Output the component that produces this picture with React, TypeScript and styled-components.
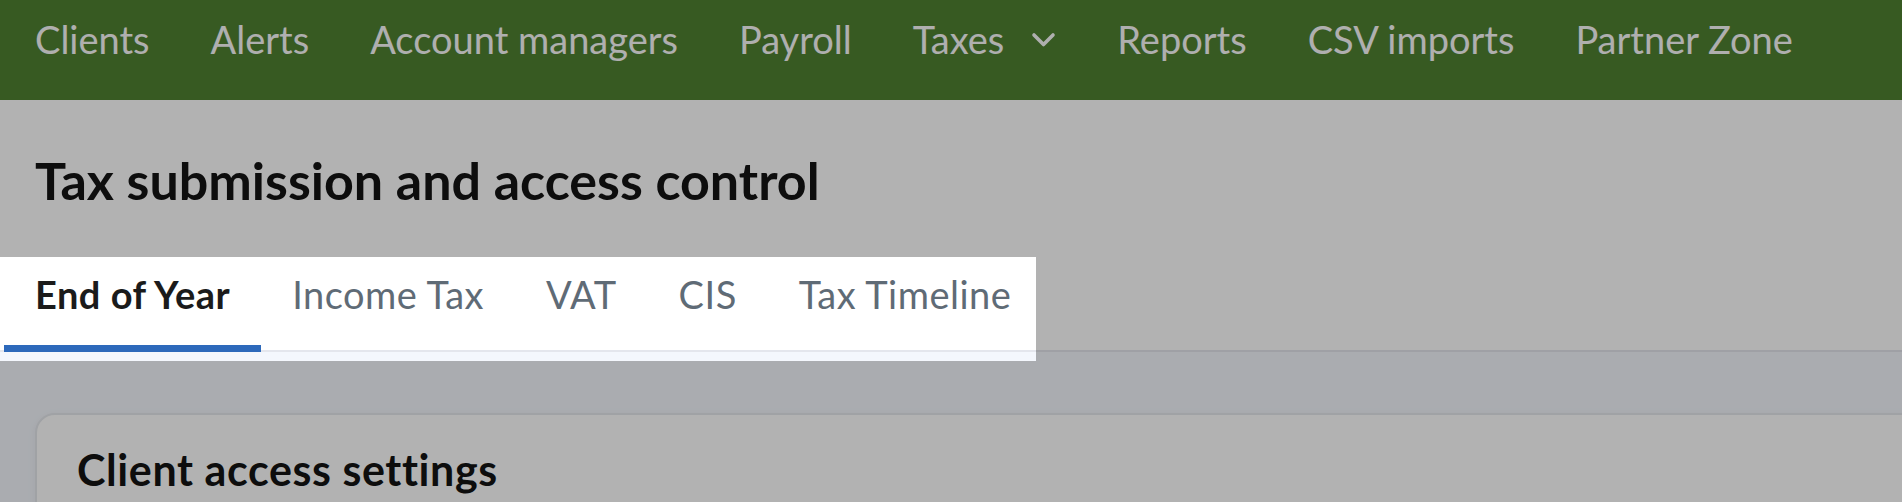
import { createGlobalStyle } from 'styled-components'
import styled from 'styled-components'

const GlobalStyle = createGlobalStyle`
  html, body {
    margin: 0;
    padding: 0;
    overflow: hidden;
    background: #f4f7fd;
    font-family: Lato, "Liberation Sans", sans-serif;
  }
`

const colors = {
  green: '#4f8132',
  white: '#ffffff',
  ink: '#131313',
  slate: '#5f6b76',
  blue: '#2d69bb',
  line: '#e4e6ed',
  page: '#f4f7fd',
}

const Page = styled.div`
  width: 100%;
  min-height: 502px;
  overflow: hidden;
`

const NavBar = styled.nav`
  height: 100px;
  box-sizing: border-box;
  background: ${colors.green};
  display: flex;
  align-items: flex-start;
  gap: 61px;
  padding: 17px 0 0 35px;
`

const NavItem = styled.a`
  display: flex;
  align-items: center;
  gap: 27px;
  color: #fbfbfb;
  font-size: 38px;
  line-height: 1.2;
  text-decoration: none;
  white-space: nowrap;
`

const Header = styled.header`
  background: ${colors.white};
  padding-top: 49px;
`

const Title = styled.h1`
  margin: 0 0 50px 35px;
  font-size: 52px;
  font-weight: 700;
  line-height: 1.2;
  color: ${colors.ink};
`

const TabBar = styled.div`
  border-bottom: 2px solid ${colors.line};
  padding-left: 4px;
`

const TabList = styled.div`
  position: relative;
  display: inline-flex;
  margin-bottom: -2px;
`

/* tutorial highlight: dims everything except the tab list */
const Spotlight = styled.div`
  position: absolute;
  top: -4px;
  bottom: -9px;
  left: -4px;
  right: 6px;
  pointer-events: none;
  z-index: 10;
  box-shadow: 0 0 0 4000px rgba(0, 0, 0, 0.3);
`

const Tab = styled.button<{ $active: boolean }>`
  border: none;
  background: none;
  font-family: inherit;
  padding: 11px 31px 27px;
  font-size: 38px;
  line-height: 1.2;
  letter-spacing: 0.5px;
  font-weight: ${({ $active }) => ($active ? 700 : 400)};
  color: ${({ $active }) => ($active ? '#1b1b1b' : colors.slate)};
  border-bottom: 7px solid ${({ $active }) => ($active ? colors.blue : 'transparent')};
  cursor: pointer;
`

const Main = styled.main`
  background: ${colors.page};
  padding: 61px 0 0 35px;
`

const Card = styled.section`
  width: calc(100% + 40px);
  box-sizing: border-box;
  background: ${colors.white};
  border: 2px solid #e5e8ed;
  border-radius: 20px;
  box-shadow: 0 2px 10px rgba(0, 0, 0, 0.05);
  padding: 29px 40px 40px;
`

const CardTitle = styled.h2`
  margin: 0;
  font-size: 43px;
  font-weight: 700;
  line-height: 1.2;
  letter-spacing: 0.6px;
  color: ${colors.ink};
`

const Chevron = () => (
  <svg width="25" height="16" viewBox="0 0 25 16" fill="none">
    <path d="M3 3l9.5 9.5L22 3" stroke="#fbfbfb" strokeWidth="3.6" strokeLinecap="round" strokeLinejoin="round" />
  </svg>
)

const navItems = ['Clients', 'Alerts', 'Account managers', 'Payroll', 'Taxes', 'Reports', 'CSV imports', 'Partner Zone']
const tabs = ['End of Year', 'Income Tax', 'VAT', 'CIS', 'Tax Timeline']

export default function App() {
  return (
    <Page>
      <GlobalStyle />
      <NavBar>
        {navItems.map((item) => (
          <NavItem key={item} href="#">
            {item}
            {item === 'Taxes' && <Chevron />}
          </NavItem>
        ))}
      </NavBar>
      <Header>
        <Title>Tax submission and access control</Title>
        <TabBar>
          <TabList>
            {tabs.map((tab, i) => (
              <Tab key={tab} $active={i === 0}>{tab}</Tab>
            ))}
            <Spotlight />
          </TabList>
        </TabBar>
      </Header>
      <Main>
        <Card>
          <CardTitle>Client access settings</CardTitle>
        </Card>
      </Main>
    </Page>
  )
}
